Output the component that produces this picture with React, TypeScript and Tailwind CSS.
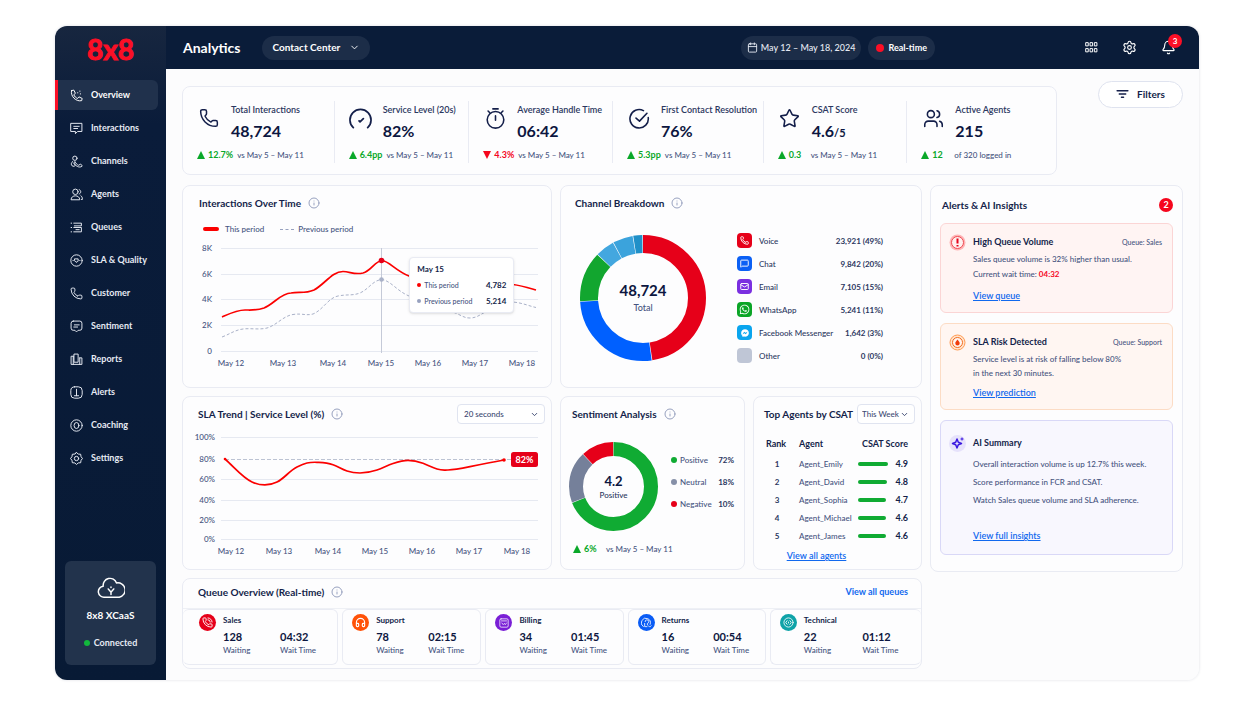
import type { ReactNode } from "react";
import {
  Bell,
  Calendar,
  ChevronDown,
  Headphones,
  Info,
  Mail,
  MessageSquare,
  MessageSquareText,
  Phone,
  PhoneCall,
  Settings,
  Star,
  Users,
} from "lucide-react";
import { FaFacebookMessenger, FaWhatsapp } from "react-icons/fa";

type IconProps = { size?: number; children: ReactNode };

function Glyph({ size = 13, children }: IconProps) {
  return (
    <svg
      width={size}
      height={size}
      viewBox="0 0 24 24"
      fill="none"
      stroke="currentColor"
      strokeWidth={1.8}
      strokeLinecap="round"
      strokeLinejoin="round"
      className="shrink-0"
      aria-hidden="true"
    >
      {children}
    </svg>
  );
}

const navItems: { label: string; icon: ReactNode }[] = [
  {
    label: "Overview",
    icon: (
      <Glyph>
        <path d="M3 3l4-1 3 6-3 2.500c1.500 3.500 3.500 5.500 7 7l2.500-3 6 3-1 4C11 24 0 13 3 3z" />
        <path d="M14 7h.5M18 4h.5M19 9h.5" />
      </Glyph>
    ),
  },
  {
    label: "Interactions",
    icon: (
      <Glyph>
        <path d="M2 2.500h20v15h-8l-4 4v-4H2zM7 8h10M7 12h7" />
      </Glyph>
    ),
  },
  {
    label: "Channels",
    icon: (
      <Glyph>
        <circle cx="9" cy="6" r="4" />
        <path d="M5 12c-3 2-3.500 6-1 8 2 1.500 5 1 6-1l-3-4 2-3c2 4 4 6 7 7l3-2c3 1 3.500 2 3 4-5 3-11 0-14-5" />
      </Glyph>
    ),
  },
  {
    label: "Agents",
    icon: (
      <Glyph>
        <circle cx="10" cy="7" r="5" />
        <path d="M2 21c0-9 16-9 16 0zM17 3c4 1 4 7 0 8M20 14c2 1.500 3 4 3 7h-2" />
      </Glyph>
    ),
  },
  {
    label: "Queues",
    icon: (
      <Glyph>
        <path d="M2 4h1M2 12h1M2 20h1M7 4h14v5H8M7 12h14v8H7M11 16h6" />
      </Glyph>
    ),
  },
  {
    label: "SLA & Quality",
    icon: (
      <Glyph>
        <circle cx="12" cy="12" r="10.500" />
        <path d="M9 9h6v4l-2 2h-2l-2-2zM5.500 12h.5M18 12h.5" />
      </Glyph>
    ),
  },
  { label: "Customer", icon: <Phone size={13} strokeWidth={1.8} /> },
  {
    label: "Sentiment",
    icon: (
      <Glyph>
        <path d="M6 2h12a4 4 0 0 1 4 4v9a4 4 0 0 1-4 4h-3l-3 3-3-3H6a4 4 0 0 1-4-4V6a4 4 0 0 1 4-4zM8 9h9M7 13h7" />
      </Glyph>
    ),
  },
  {
    label: "Reports",
    icon: (
      <Glyph>
        <path d="M6 6H2v15h20V9h-4M8 2h7v15H8zM18 9v12M6 6v15" />
      </Glyph>
    ),
  },
  {
    label: "Alerts",
    icon: (
      <Glyph>
        <rect x="1.500" y="1.500" width="21" height="21" rx="7" />
        <path d="M12 6v9M8 18h8M12 15v3" />
      </Glyph>
    ),
  },
  {
    label: "Coaching",
    icon: (
      <Glyph>
        <circle cx="12" cy="12" r="10.500" />
        <ellipse cx="12" cy="12" rx="4.500" ry="5.500" />
      </Glyph>
    ),
  },
  {
    label: "Settings",
    icon: (
      <Glyph>
        <path d="M12 1l3.200 2.800 4.500.4.700 4.400L23 12l-2.600 3.400-.7 4.400-4.500.4L12 23l-3.200-2.800-4.500-.4-.7-4.400L1 12l2.600-3.400.7-4.400 4.500-.4z" />
        <circle cx="12" cy="12" r="4" />
      </Glyph>
    ),
  },
];

const kpis = [
  {
    label: "Total Interactions",
    value: "48,724",
    delta: "12.7%",
    note: "vs May 5 – May 11",
    icon: <Phone size={20} strokeWidth={1.8} />,
  },
  {
    label: "Service Level (20s)",
    value: "82%",
    delta: "6.4pp",
    note: "vs May 5 – May 11",
    icon: (
      <Glyph size={23}>
        <path d="M4.500 20.500a11 11 0 1 1 15 0M10.500 13.500l1 1 3.500-3.500" />
      </Glyph>
    ),
  },
  {
    label: "Average Handle Time",
    value: "06:42",
    delta: "4.3%",
    down: true,
    note: "vs May 5 – May 11",
    icon: (
      <Glyph size={21}>
        <circle cx="12" cy="13.500" r="9.500" />
        <path d="M9 1h6M12 9v5M3.500 3.500L5.500 5.500M20.500 3.500l-2 2" />
      </Glyph>
    ),
  },
  {
    label: "First Contact Resolution",
    value: "76%",
    delta: "5.3pp",
    note: "vs May 5 – May 11",
    icon: (
      <Glyph size={21}>
        <path d="M22 11a10.500 10.500 0 1 1-5.500-8M8 11.500l4 3.500L20.500 6" />
      </Glyph>
    ),
  },
  {
    label: "CSAT Score",
    value: "4.6",
    suffix: "/5",
    delta: "0.3",
    note: "vs May 5 – May 11",
    icon: <Star size={21} strokeWidth={1.8} />,
  },
  {
    label: "Active Agents",
    value: "215",
    delta: "12",
    note: "of 320 logged in",
    icon: <Users size={21} strokeWidth={1.8} />,
  },
];

const channels = [
  { name: "Voice", value: "23,921 (49%)", color: "bg-[#e60019]", icon: <Phone size={9} strokeWidth={2.5} /> },
  { name: "Chat", value: "9,842 (20%)", color: "bg-[#0b60f5]", icon: <MessageSquare size={9} strokeWidth={2.5} /> },
  { name: "Email", value: "7,105 (15%)", color: "bg-[#7a2fe0]", icon: <Mail size={9} strokeWidth={2.5} /> },
  { name: "WhatsApp", value: "5,241 (11%)", color: "bg-[#0ba527]", icon: <FaWhatsapp size={11} /> },
  { name: "Facebook Messenger", value: "1,642 (3%)", color: "bg-[#0aa5ee]", icon: <FaFacebookMessenger size={8} /> },
  { name: "Other", value: "0 (0%)", color: "bg-[#bfc6d6]", icon: null },
];

const channelArcs = [
  { from: 0, to: 172, color: "#e60019" },
  { from: 172, to: 267, color: "#0060ff" },
  { from: 267, to: 314, color: "#12a62f" },
  { from: 314, to: 332, color: "#43a7df" },
  { from: 332, to: 351, color: "#3ba3dc" },
  { from: 351, to: 360, color: "#2090c8" },
];

const sentimentArcs = [
  { from: 0, to: 249, color: "#10ab33" },
  { from: 249, to: 317, color: "#75809a" },
  { from: 317, to: 360, color: "#e60019" },
];

const sentiments = [
  { name: "Positive", value: "72%", color: "bg-[#10ab33]" },
  { name: "Neutral", value: "18%", color: "bg-[#8690a8]" },
  { name: "Negative", value: "10%", color: "bg-[#e60019]" },
];

const agents = [
  { name: "Agent_Emily", score: 4.9 },
  { name: "Agent_David", score: 4.8 },
  { name: "Agent_Sophia", score: 4.7 },
  { name: "Agent_Michael", score: 4.6 },
  { name: "Agent_James", score: 4.6 },
];

const queues = [
  { name: "Sales", waiting: 128, time: "04:32", color: "bg-[#e60019]", icon: <PhoneCall size={11} strokeWidth={2} /> },
  { name: "Support", waiting: 78, time: "02:15", color: "bg-[#ff5208]", icon: <Headphones size={11} strokeWidth={2.5} /> },
  {
    name: "Billing",
    waiting: 34,
    time: "01:45",
    color: "bg-[#7a1fd6]",
    icon: (
      <Glyph size={10}>
        <rect x="2" y="2" width="20" height="20" rx="3" />
        <path d="M6 7h12M7 12l3 4 3-3 2 3 3-4" />
      </Glyph>
    ),
  },
  {
    name: "Returns",
    waiting: 16,
    time: "00:54",
    color: "bg-[#0a5cf5]",
    icon: (
      <Glyph size={11}>
        <path d="M5 21a10 10 0 1 1 15-5M9 10a4 4 0 1 1 5 4v3M8 14v7h5M16 19l3 3 3-3" />
      </Glyph>
    ),
  },
  {
    name: "Technical",
    waiting: 22,
    time: "01:12",
    color: "bg-[#0fa3a8]",
    icon: (
      <Glyph size={11}>
        <circle cx="12" cy="12" r="10" />
        <path d="M9 8l-3 4 3 4M15 8l3 4-3 4M12 11v2" />
      </Glyph>
    ),
  },
];

const volumeTicks = [
  { label: "8K", y: 11 },
  { label: "6K", y: 37 },
  { label: "4K", y: 62 },
  { label: "2K", y: 88 },
  { label: "0", y: 114 },
];

const slaTicks = [
  { label: "100%", y: 9 },
  { label: "80%", y: 31 },
  { label: "60%", y: 51 },
  { label: "40%", y: 72 },
  { label: "20%", y: 92 },
  { label: "0%", y: 111 },
];

const days = ["May 12", "May 13", "May 14", "May 15", "May 16", "May 17", "May 18"];
const volumeDayX = [48, 100, 150, 198, 245, 292, 339];
const slaDayX = [48, 96, 145, 192, 239, 286, 334];

function Card({ className = "", children }: { className?: string; children: ReactNode }) {
  return (
    <section className={`rounded-lg border border-[#e9ebf3] bg-[#fdfdfe] ${className}`}>{children}</section>
  );
}

function Title({ children, info = true }: { children: ReactNode; info?: boolean }) {
  return (
    <h2 className="flex items-center gap-[7px] text-[10px] leading-4 font-bold whitespace-nowrap text-[#141f4a]">
      {children}
      {info && <Info size={12} strokeWidth={2} className="text-[#97a1bf]" />}
    </h2>
  );
}

function Delta({ down = false, children }: { down?: boolean; children: ReactNode }) {
  return (
    <span
      className={`flex min-w-[29px] items-center gap-[3px] text-[9px] font-bold ${down ? "text-[#f5061d]" : "text-[#0aa829]"}`}
    >
      <svg width="8" height="8" viewBox="0 0 8 8" fill="currentColor" aria-hidden="true">
        {down ? <path d="M0 0h8L4 8z" /> : <path d="M0 8h8L4 0z" />}
      </svg>
      {children}
    </span>
  );
}

function Donut({
  arcs,
  size,
  thickness,
  children,
}: {
  arcs: { from: number; to: number; color: string }[];
  size: number;
  thickness: number;
  children: ReactNode;
}) {
  const r = (size - thickness) / 2;
  return (
    <div className="grid shrink-0 place-items-center">
      <svg width={size} height={size} viewBox={`0 0 ${size} ${size}`} className="col-start-1 row-start-1 -rotate-90">
        {arcs.map((arc) => (
          <circle
            key={arc.from}
            cx={size / 2}
            cy={size / 2}
            r={r}
            fill="none"
            stroke={arc.color}
            strokeWidth={thickness}
            pathLength={360}
            strokeDasharray={`${arc.to - arc.from - 0.6} 360`}
            strokeDashoffset={-arc.from}
          />
        ))}
      </svg>
      <div className="col-start-1 row-start-1 text-center">{children}</div>
    </div>
  );
}

function Picker({ label, className, options }: { label: string; className: string; options: string[] }) {
  return (
    <div className="grid items-center">
      <select
        aria-label={label}
        className={`col-start-1 row-start-1 h-5 appearance-none rounded border border-[#e0e4f0] bg-white text-[8px] text-[#3d4a72] ${className}`}
      >
        {options.map((option) => (
          <option key={option}>{option}</option>
        ))}
      </select>
      <ChevronDown
        size={9}
        strokeWidth={2.5}
        className="pointer-events-none col-start-1 row-start-1 mr-1.5 justify-self-end text-[#3d4a72]"
      />
    </div>
  );
}

function Sidebar() {
  return (
    <aside className="flex w-[111px] shrink-0 flex-col bg-linear-to-b from-[#17263f] via-[#0a1c3a] via-15% to-[#081a35] pb-[15px] text-white">
      <div className="flex h-[46px] items-center justify-center text-[28px] font-bold text-[#fb0f26] [-webkit-text-stroke:1px_#fb0f26]">
        8x8
      </div>
      <nav className="mt-2 flex flex-col">
        {navItems.map((item, i) => (
          <a
            key={item.label}
            href="#"
            aria-current={i === 0 ? "page" : undefined}
            className={`mr-2 mb-[3px] flex h-[30px] items-center gap-2 rounded-r-md border-l-3 pl-3 text-[9px] font-bold ${
              i === 0 ? "border-[#fb0f26] bg-[#20314c]" : "border-transparent text-[#e6eaf3]"
            }`}
          >
            {item.icon}
            {item.label}
          </a>
        ))}
      </nav>
      <div className="mx-2.5 mt-auto flex h-[104px] flex-col items-center rounded-md bg-[#22334c] pt-4 font-bold">
        <svg width="28" height="22" viewBox="0 0 30 24" fill="none" stroke="currentColor" strokeWidth="1.600">
          <path d="M8 22a6 6 0 0 1-1.500-12A7.500 7.500 0 0 1 21 6.500 7 7 0 0 1 24 22z" strokeLinejoin="round" />
          <path d="M12 13l3 3.500 3-3.500M15 16v3M15 11v.5" strokeLinecap="round" />
        </svg>
        <span className="mt-2 text-[10px] leading-4">8x8 XCaaS</span>
        <span className="mt-3 flex items-center gap-1 text-[9px] leading-4 text-[#e6eaf3]">
          <i className="size-1.5 rounded-full bg-[#12b83c]" />
          Connected
        </span>
      </div>
    </aside>
  );
}

function Header() {
  return (
    <header className="flex h-[43px] items-center bg-[#0a1c39] pr-[23px] pl-[17px] text-white">
      <h1 className="text-[14px] font-bold">Analytics</h1>
      <div className="ml-[22px] grid items-center">
        <select
          aria-label="Workspace"
          className="col-start-1 row-start-1 h-6 w-[108px] appearance-none rounded-full bg-[#1c2d48] pl-2.5 text-[10px] font-bold"
        >
          <option>Contact Center</option>
        </select>
        <ChevronDown size={11} className="pointer-events-none col-start-1 row-start-1 mr-2.5 justify-self-end" />
      </div>
      <button className="ml-auto flex h-6 items-center gap-[3px] rounded-full bg-[#1c2d48] px-1.5 text-[9px] whitespace-nowrap text-[#e6eaf3]">
        <Calendar size={11} />
        May 12 – May 18, 2024
      </button>
      <button className="ml-[7px] flex h-6 items-center gap-1 rounded-full bg-[#1c2d48] px-2 text-[9px] font-bold whitespace-nowrap">
        <i className="size-2 rounded-full bg-[#fb0f26]" />
        Real-time
      </button>
      <div className="ml-[150px] flex items-center gap-6">
        <button aria-label="Apps">
          <Glyph size={13}>
            <path d="M2 3h4v6H2zM10 3h4v6h-4zM18 3h4v6h-4zM2 14h4v6H2zM10 14h4v6h-4zM18 14h4v6h-4z" />
          </Glyph>
        </button>
        <button aria-label="Settings">
          <Settings size={15} strokeWidth={1.8} />
        </button>
        <button aria-label="Notifications" className="relative">
          <Bell size={15} strokeWidth={1.8} />
          <span className="absolute -top-1.5 -right-1.5 flex size-3.5 items-center justify-center rounded-full bg-[#fb0f26] text-[8px] font-bold">
            3
          </span>
        </button>
      </div>
    </header>
  );
}

function KpiStrip() {
  return (
    <Card className="mt-[5px] grid h-[89px] grid-cols-[152fr_135fr_144fr_151fr_144fr_149fr]">
      {kpis.map((kpi, i) => (
        <div
          key={kpi.label}
          className={`my-3.5 min-w-0 pl-3.5 whitespace-nowrap ${i < kpis.length - 1 ? "border-r border-[#e9ebf3]" : ""}`}
        >
          <div className="flex items-start gap-[10px]">
            <div className="mt-[7px] flex w-6 justify-center text-[#141f4a]">{kpi.icon}</div>
            <div>
              <p className="text-[9px] leading-[18px] font-semibold text-[#2b3760]">{kpi.label}</p>
              <p className="flex h-6 items-baseline text-[16px] leading-6 font-bold text-[#0c1640]">
                {kpi.value}
                {kpi.suffix && <span className="text-[11px] leading-none">{kpi.suffix}</span>}
              </p>
            </div>
          </div>
          <p className="mt-1 flex gap-1 text-[8px] leading-4 text-[#465480]">
            <Delta down={kpi.down}>{kpi.delta}</Delta>
            {kpi.note}
          </p>
        </div>
      ))}
    </Card>
  );
}

function InteractionsCard() {
  return (
    <Card className="h-[203px] pt-[9px]">
      <div className="pl-4">
        <Title>Interactions Over Time</Title>
        <div className="mt-[10px] flex items-center gap-4 pl-1 text-[8px] leading-4 text-[#465480]">
          <span className="flex items-center gap-1.5">
            <i className="h-1 w-4 rounded-full bg-[#fb0000]" />
            This period
          </span>
          <span className="flex items-center gap-1">
            <i className="w-3.5 border-t border-dashed border-[#97a1bf]" />
            Previous period
          </span>
        </div>
      </div>
      <div className="relative">
        <svg viewBox="0 0 368 134" className="w-full" role="img" aria-label="Interactions per day">
          {volumeTicks.map((tick) => (
            <g key={tick.label}>
              <path d={`M38 ${tick.y}.5H355`} stroke="#e6e9f1" />
              <text x="29" y={tick.y + 3} textAnchor="end" fontSize="8" fill="#465480">
                {tick.label}
              </text>
            </g>
          ))}
          {days.map((day, i) => (
            <text key={day} x={volumeDayX[i]} y="129" textAnchor="middle" fontSize="8" fill="#465480">
              {day}
            </text>
          ))}
          <path d="M198.500 11v105" stroke="#c5cad8" />
          <path
            d="M39 100C47 97 52 93 60 92S76 93 84 91C94 88 100 79 110 77.500S122 79 130 77C140 73 145 61 155 59S169 59 177 56C186 52 190 43 199 42.500C208 44 214 54 226 59C240 64 255 70 267 74S280 81 287 81S298 77 305 73.500S320 64 330 65S346 69 353 70.500"
            fill="none"
            stroke="#a9b1c8"
            strokeDasharray="3 2"
          />
          <path
            d="M39 80C48 76 54 73 62 73C70 73 74 73.500 81 71C91 67 98 56 108 56C116 54.500 122 57 131 53C142 47 149 34.500 160 34.500C167 34.500 171 38 180 36C188 34 192 24 199 23.500C206 24 213 34 226 39C250 50 270 66 290 60C306 54 318 45 330 47.500C338 48.500 346 51 353 53"
            fill="none"
            stroke="#fb0000"
            strokeWidth="1.700"
          />
          <circle cx="198.500" cy="23.500" r="2.800" fill="#e60019" />
          <circle cx="198.500" cy="42.500" r="2.300" fill="#a9b1c8" />
        </svg>
        <div className="absolute top-5 left-[61.5%] w-[105px] rounded border border-[#e9ebf3] bg-white px-[7px] py-[3px] text-[8px] leading-4 whitespace-nowrap text-[#465480] shadow-sm">
          <p className="font-bold text-[#141f4a]">May 15</p>
          <p className="flex items-center gap-[3px]">
            <i className="size-1 rounded-full bg-[#fb0000]" />
            <span className="text-[7px]">This period</span>
            <b className="ml-auto text-[#141f4a]">4,782</b>
          </p>
          <p className="flex items-center gap-[3px]">
            <i className="size-1 rounded-full bg-[#97a1bf]" />
            <span className="text-[7px]">Previous period</span>
            <b className="ml-auto text-[#141f4a]">5,214</b>
          </p>
        </div>
      </div>
    </Card>
  );
}

function ChannelCard() {
  return (
    <Card className="h-[203px] pt-[9px] pl-3.5">
      <Title>Channel Breakdown</Title>
      <div className="mt-[18px] flex items-center justify-between pr-[38px] pl-[5px]">
        <Donut arcs={channelArcs} size={126} thickness={18}>
          <p className="text-[15px] leading-5 font-bold text-[#0c1640]">48,724</p>
          <p className="text-[9px] leading-4 text-[#465480]">Total</p>
        </Donut>
        <ul className="w-[146px] text-[8px] text-[#2b3760]">
          {channels.map((channel) => (
            <li key={channel.name} className="flex h-[23px] items-center whitespace-nowrap">
              <span className={`mr-[7px] flex size-[15px] items-center justify-center rounded text-white ${channel.color}`}>
                {channel.icon}
              </span>
              {channel.name}
              <span className="ml-auto font-bold">{channel.value}</span>
            </li>
          ))}
        </ul>
      </div>
    </Card>
  );
}

function SlaCard() {
  return (
    <Card className="h-[174px] pt-[7px]">
      <div className="flex items-center justify-between pr-1.5 pl-[15px]">
        <Title>SLA Trend | Service Level (%)</Title>
        <Picker label="Service level target" className="w-[88px] pl-1.5" options={["20 seconds", "30 seconds"]} />
      </div>
      <svg viewBox="0 0 368 134" className="mt-1 w-full" role="img" aria-label="Service level per day">
        {slaTicks.map((tick) => (
          <g key={tick.label}>
            {tick.label === "80%" ? (
              <path d={`M42 ${tick.y}.5H328`} stroke="#bcc3d3" strokeDasharray="4 2" />
            ) : (
              <path d={`M38 ${tick.y}.5H355`} stroke="#e6e9f1" />
            )}
            <text x="32" y={tick.y + 3} textAnchor="end" fontSize="8" fill="#465480">
              {tick.label}
            </text>
          </g>
        ))}
        {days.map((day, i) => (
          <text key={day} x={slaDayX[i]} y="126" textAnchor="middle" fontSize="8" fill="#465480">
            {day}
          </text>
        ))}
        <path
          d="M42 31C52 40 60 50 69 54S86 58 94 54S106 43 114 39S126 34 134 34.300S144 34.500 150 36.700S158 41 164 43S172 45 177 45S188 44 194 42S204 37.500 210 35.500S220 32.300 225 32.300S234 33 240 35.300S249 39.500 254 41S260 42 265 42S276 41 287 38.700S310 34 321 32"
          fill="none"
          stroke="#fb0000"
          strokeWidth="1.700"
        />
        <circle cx="42" cy="31" r="1.300" fill="#fb0000" />
        <circle cx="321" cy="32" r="1.800" fill="#fb0000" />
        <rect x="328" y="24" width="27" height="15" rx="2.500" fill="#e60019" />
        <text x="341.500" y="35" textAnchor="middle" fontSize="9" fontWeight="700" fill="#fff">
          82%
        </text>
      </svg>
    </Card>
  );
}

function SentimentCard() {
  return (
    <Card className="h-[174px] pt-[9px]">
      <div className="pl-[11px]">
        <Title>Sentiment Analysis</Title>
      </div>
      <div className="mt-5 flex items-start justify-between pr-2.5 pl-2">
        <Donut arcs={sentimentArcs} size={89} thickness={14}>
          <p className="text-[13px] leading-4 font-bold text-[#0c1640]">4.2</p>
          <p className="text-[8px] leading-3 text-[#2b3760]">Positive</p>
        </Donut>
        <ul className="mt-[7px] w-[63px] text-[8px] text-[#465480]">
          {sentiments.map((item) => (
            <li key={item.name} className="flex h-[22px] items-center">
              <i className={`mr-[3px] size-1.5 rounded-full ${item.color}`} />
              {item.name}
              <span className="ml-auto font-bold text-[#2b3760]">{item.value}</span>
            </li>
          ))}
        </ul>
      </div>
      <p className="mt-2.5 flex gap-1 pl-3 text-[8px] leading-4 text-[#465480]">
        <Delta>6%</Delta>
        vs May 5 – May 11
      </p>
    </Card>
  );
}

function AgentsCard() {
  return (
    <Card className="h-[174px] pt-[7px] pl-[10px]">
      <div className="flex items-center justify-between pr-[6px]">
        <Title info={false}>Top Agents by CSAT</Title>
        <Picker label="Period" className="w-[58px] pl-1" options={["This Week", "Last Week"]} />
      </div>
      <table className="mt-[9px] w-full text-[8px] text-[#465480]">
        <thead>
          <tr className="h-[22px] text-left text-[9px] whitespace-nowrap text-[#141f4a]">
            <th className="w-[35px] pl-0.5">Rank</th>
            <th>Agent</th>
            <th colSpan={2} className="pr-[13px] text-right">
              CSAT Score
            </th>
          </tr>
        </thead>
        <tbody>
          {agents.map((agent, i) => (
            <tr key={agent.name} className="h-[18px]">
              <td className="pr-[9px] text-center font-bold text-[#2b3760]">{i + 1}</td>
              <td>{agent.name}</td>
              <td className="w-[30px]">
                <div className="h-1 rounded-full bg-[#10ab33]" style={{ width: `${agent.score * 20}%` }} />
              </td>
              <td className="pr-[13px] text-right text-[9px] font-bold text-[#141f4a]">{agent.score.toFixed(1)}</td>
            </tr>
          ))}
        </tbody>
      </table>
      <p className="pt-[3px] pr-[52px] text-center text-[9px] leading-4">
        <a href="#" className="font-semibold text-[#1169ee] underline">
          View all agents
        </a>
      </p>
    </Card>
  );
}

function QueueOverview() {
  return (
    <Card className="h-[91px] pt-[5px]">
      <div className="flex items-center justify-between pr-[13px] pb-2 pl-[15px]">
        <Title>Queue Overview (Real-time)</Title>
        <a href="#" className="text-[9px] leading-4 font-bold text-[#1169ee]">
          View all queues
        </a>
      </div>
      <div className="grid grid-cols-[155fr_139fr_138fr_138fr_151fr] gap-1 border-t border-[#eef0f5]">
        {queues.map((queue) => (
          <div
            key={queue.name}
            className="flex h-[56px] gap-[7px] rounded-md border border-[#e9ebf3] pt-1 pl-[9px] whitespace-nowrap first:border-l-0 first:pl-4 last:border-r-0"
          >
            <span className={`flex size-[17px] shrink-0 items-center justify-center rounded-full text-white ${queue.color}`}>
              {queue.icon}
            </span>
            <div className="flex-1">
              <h3 className="text-[8px] leading-3 font-bold text-[#141f4a]">{queue.name}</h3>
              <dl className="mt-1 grid grid-cols-2">
                <div className="flex flex-col-reverse">
                  <dt className="text-[8px] leading-3 text-[#465480]">Waiting</dt>
                  <dd className="text-[11px] leading-[14px] font-bold text-[#0c1640]">{queue.waiting}</dd>
                </div>
                <div className="flex flex-col-reverse">
                  <dt className="text-[8px] leading-3 text-[#465480]">Wait Time</dt>
                  <dd className="text-[11px] leading-[14px] font-bold text-[#0c1640]">{queue.time}</dd>
                </div>
              </dl>
            </div>
          </div>
        ))}
      </div>
    </Card>
  );
}

function Alert({
  title,
  queue,
  icon,
  link,
  className,
  children,
}: {
  title: string;
  queue?: string;
  icon: ReactNode;
  link: string;
  className: string;
  children: ReactNode;
}) {
  return (
    <article className={`flex gap-[7px] rounded-md border pr-2.5 pl-2 ${className}`}>
      <div className="shrink-0">{icon}</div>
      <div className="flex flex-1 flex-col whitespace-nowrap">
        <div className="flex items-center justify-between">
          <h3 className="text-[9px] leading-4 font-bold text-[#141f4a]">{title}</h3>
          {queue && <span className="text-[7px] text-[#465480]">Queue: {queue}</span>}
        </div>
        {children}
        <a href="#" className="mt-auto self-start text-[9px] leading-4 font-semibold text-[#1169ee] underline">
          {link}
        </a>
      </div>
    </article>
  );
}

function AlertsPanel() {
  return (
    <Card className="h-[387px] px-[9px] pt-[11px]">
      <div className="flex items-center justify-between pr-0 pl-0.5">
        <Title info={false}>Alerts &amp; AI Insights</Title>
        <span className="flex size-3.5 items-center justify-center rounded-full bg-[#f5061d] text-[9px] font-bold text-white">
          2
        </span>
      </div>
      <div className="mt-[10px] flex flex-col gap-2.5">
        <Alert
          title="High Queue Volume"
          queue="Sales"
          link="View queue"
          className="h-[90px] border-[#fbd5d5] bg-[#fff4f3] pt-2.5 pb-2"
          icon={
            <svg width="17" height="17" viewBox="0 0 17 17">
              <circle cx="8.500" cy="8.500" r="8" fill="#ffb3b5" />
              <circle cx="8.500" cy="8.500" r="6" fill="#fff0ef" stroke="#ee4a52" />
              <path d="M8.500 4.500v5M8.500 11v1.500" stroke="#e60019" strokeWidth="2" />
            </svg>
          }
        >
          <p className="mt-0.5 text-[8px] leading-[15px] text-[#465480]">
            Sales queue volume is 32% higher than usual.
            <br />
            Current wait time: <b className="text-[#f5061d]">04:32</b>
          </p>
        </Alert>
        <Alert
          title="SLA Risk Detected"
          queue="Support"
          link="View prediction"
          className="h-[87px] border-[#fcdcc5] bg-[#fff6f2] pt-2.5 pb-2"
          icon={
            <svg width="17" height="17" viewBox="0 0 17 17">
              <circle cx="8.500" cy="8.500" r="7.500" fill="#ffe3cc" stroke="#ff9b52" />
              <circle cx="8.500" cy="8.500" r="5" fill="#fff6f2" stroke="#f46a1c" />
              <path d="M8.500 5.500c1 1.500 2.200 2.300 2.200 3.700a2.200 2.200 0 0 1-4.400 0c0-1.400 1.200-2.200 2.200-3.700z" fill="#f03c0a" />
            </svg>
          }
        >
          <p className="mt-0.5 text-[8px] leading-[14px] text-[#465480]">
            Service level is at risk of falling below 80%
            <br />
            in the next 30 minutes.
          </p>
        </Alert>
        <Alert
          title="AI Summary"
          link="View full insights"
          className="h-[135px] border-[#d9d8f7] bg-[#f8f7fe] pt-3.5 pb-2.5"
          icon={
            <svg width="17" height="17" viewBox="0 0 17 17" fill="none">
              <circle cx="8.500" cy="8.500" r="8.500" fill="#e6e2fb" />
              <path
                d="M8 4l1.300 3.200L12.500 8.500 9.300 9.800 8 13 6.700 9.800 3.500 8.500 6.700 7.200z"
                stroke="#3a17e0"
                strokeWidth="1.500"
                strokeLinejoin="round"
              />
              <path d="M13 2.500v3M11.500 4h3" stroke="#3a17e0" />
            </svg>
          }
        >
          <p className="mt-1 text-[8px] leading-[18px] text-[#465480]">
            Overall interaction volume is up 12.7% this week.
            <br />
            Score performance in FCR and CSAT.
            <br />
            Watch Sales queue volume and SLA adherence.
          </p>
        </Alert>
      </div>
    </Card>
  );
}

export default function App() {
  return (
    <div className="min-h-screen bg-white px-[55px] py-[26px] font-['Lato',sans-serif] font-medium">
      <div className="flex overflow-hidden rounded-xl shadow-[0_0_3px_rgba(20,31,74,0.15)]">
        <Sidebar />
        <div className="min-w-0 flex-1 bg-[#fcfcfd]">
          <Header />
          <main className="px-4 pt-3 pb-[11px]">
            <div className="grid grid-cols-[875fr_126fr] items-start">
              <KpiStrip />
              <button className="flex h-[27px] w-[85px] items-center justify-center gap-2 justify-self-end rounded-full border border-[#dfe3ef] bg-white text-[10px] font-bold text-[#141f4a]">
                <Glyph size={13}>
                  <path d="M2 5h20M6 11h12M10 17h4" strokeWidth={2.5} />
                </Glyph>
                Filters
              </button>
            </div>
            <div className="mt-2.5 grid grid-cols-[minmax(0,740fr)_minmax(0,253fr)] items-start gap-2">
              <div className="flex flex-col gap-2">
                <div className="grid grid-cols-[minmax(0,370fr)_minmax(0,362fr)] gap-2">
                  <InteractionsCard />
                  <ChannelCard />
                </div>
                <div className="grid grid-cols-[minmax(0,370fr)_minmax(0,362fr)] gap-2">
                  <SlaCard />
                  <div className="grid grid-cols-[minmax(0,185fr)_minmax(0,169fr)] gap-2">
                    <SentimentCard />
                    <AgentsCard />
                  </div>
                </div>
                <QueueOverview />
              </div>
              <AlertsPanel />
            </div>
          </main>
        </div>
      </div>
    </div>
  );
}
